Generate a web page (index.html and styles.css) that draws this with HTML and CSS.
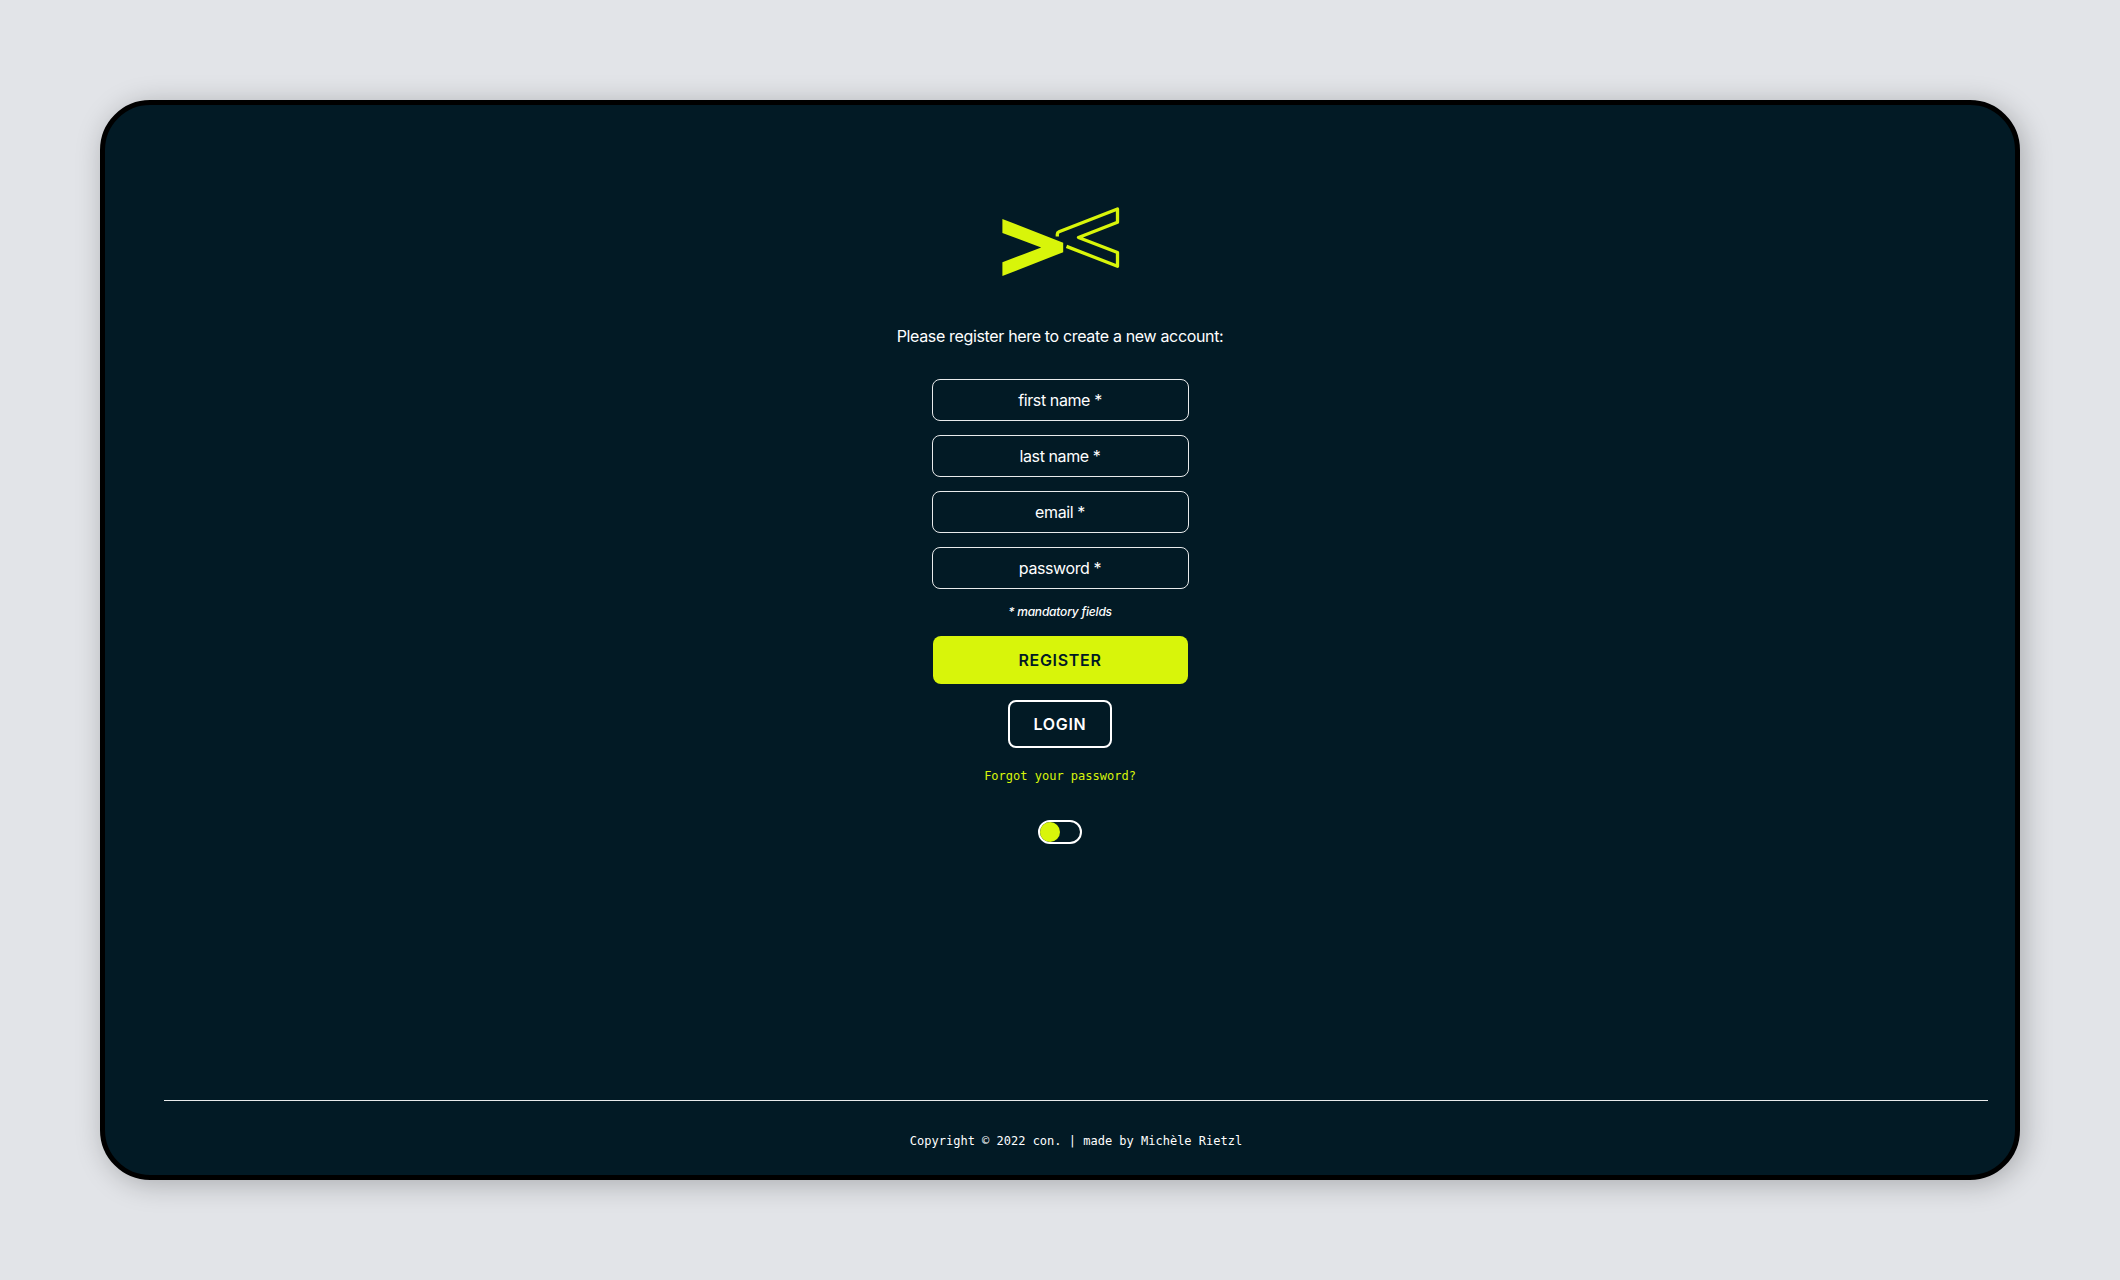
FILE: index.html
```html
<!DOCTYPE html>
<html lang="en">
<head>
<meta charset="utf-8">
<title>con. | Register</title>
<link rel="stylesheet" href="styles.css">
</head>
<body>
<div class="screen">
  <main class="register">
    <svg class="logo" viewBox="0 0 118 70" role="img" aria-label="con.">
      <path class="logo-solid" d="M.400 12 61.200 35.700V45.200L.400 69V55.300L39.200 40.500.400 26Z"/>
      <path class="logo-outline" d="M55.300 29.500V27.200Q55.300 25.400 57 24.700L115.500 2V15.300L76.500 30.500 115.500 45.500V59.300L64.500 39.400"/>
    </svg>
    <p class="intro">Please register here to create a new account:</p>
    <form class="form">
      <input class="field" type="text" placeholder="first name *">
      <input class="field" type="text" placeholder="last name *">
      <input class="field" type="email" placeholder="email *">
      <input class="field" type="password" placeholder="password *">
      <p class="hint">* mandatory fields</p>
      <button class="btn btn-primary" type="button">REGISTER</button>
      <button class="btn btn-outline" type="button">LOGIN</button>
    </form>
    <a class="forgot">Forgot your password?</a>
    <span class="toggle"><span class="knob"></span></span>
  </main>
  <footer class="footer">Copyright © 2022 con. | made by Michèle Rietzl</footer>
</div>
</body>
</html>
```
FILE: styles.css
```css
* { box-sizing: border-box; }
body {
  margin: 0;
  height: 1280px;
  padding: 100px;
  background: #e2e4e8;
  font-family: Inter, sans-serif;
  color: #fff;
}
.screen {
  height: 1080px;
  display: flex;
  flex-direction: column;
  border: 5px solid #000;
  border-radius: 50px;
  background: #021a25;
  box-shadow: 4px 4px 28px rgba(0, 0, 0, 0.25);
}
.register {
  flex: 1;
  display: flex;
  flex-direction: column;
  align-items: center;
  padding-top: 102px;
}
.logo { display: block; width: 118px; height: 70px; margin-left: 2px; }
.logo-solid { fill: #d8f50a; }
.logo-outline { fill: none; stroke: #d8f50a; stroke-width: 3.3; stroke-linejoin: round; }
.intro { margin: 49px 0 0; font-size: 16px; line-height: 20px; letter-spacing: -0.34px; }
.form {
  display: flex;
  flex-direction: column;
  align-items: center;
  margin-top: 33px;
}
.field {
  width: 257px;
  height: 42px;
  margin: 0 0 14px 1px;
  padding: 0 1px 0 0;
  border: 1px solid #e9ebec;
  border-radius: 8px;
  background: transparent;
  color: #fff;
  font: 16px Inter, sans-serif;
  letter-spacing: -0.4px;
  text-align: center;
}
.field::placeholder { color: #fff; opacity: 1; }
.hint { margin: 1px 0 0; font-size: 12px; line-height: 16px; font-style: italic; font-weight: 500; letter-spacing: -0.2px; }
.btn {
  height: 48px;
  padding: 0;
  border-radius: 8px;
  font: 600 16px Inter, sans-serif;
  letter-spacing: 0.7px;
}
.btn-primary { width: 255px; margin: 16px 0 0 1px; padding-right: 1px; border: 0; background: #d8f50a; color: #021a25; }
.btn-outline { width: 104px; margin-top: 16px; border: 2px solid #fff; background: transparent; color: #fff; }
.forgot { margin-top: 20px; font: 12px/16px "DejaVu Sans Mono", monospace; color: #d8f50a; }
.toggle {
  display: flex;
  width: 44px;
  height: 24px;
  margin-top: 36px;
  border: 2px solid #fff;
  border-radius: 12px;
}
.knob { width: 20px; height: 20px; border-radius: 50%; background: #d8f50a; }
.footer {
  height: 75px;
  margin: 0 27px 0 59px;
  padding-top: 32px;
  border-top: 1px solid #e9ebec;
  font: 12px/16px "DejaVu Sans Mono", monospace;
  text-align: center;
}
```
